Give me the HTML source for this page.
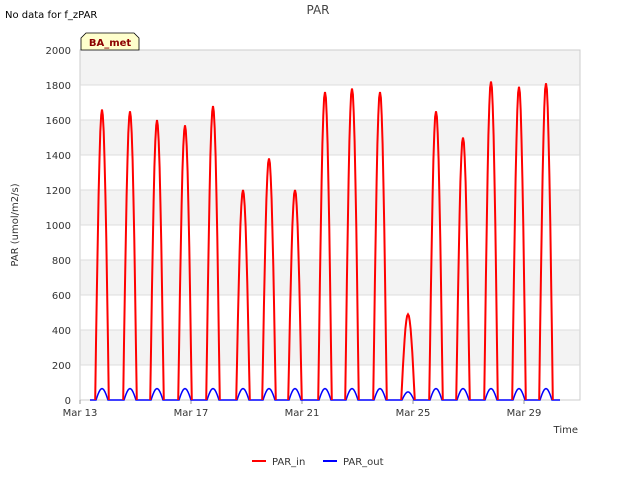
<!DOCTYPE html>
<html><head><meta charset="utf-8"><style>
body{margin:0;background:#fff;}
svg text{font-family:"DejaVu Sans","Liberation Sans",sans-serif;}
</style></head><body>
<svg id="s" width="640" height="480" viewBox="0 0 640 480" xmlns="http://www.w3.org/2000/svg">
<rect width="640" height="480" fill="#fff"/>
<text x="5" y="18" font-size="10" fill="#000">No data for f_zPAR</text>
<text x="318" y="14" font-size="12" fill="#444" text-anchor="middle">PAR</text>
<rect x="80" y="50" width="500" height="350" fill="#fff" stroke="#ccc"/>
<g fill="#f3f3f3">
<rect x="80.5" y="50.5" width="499" height="35"/>
<rect x="80.5" y="120" width="499" height="35"/>
<rect x="80.5" y="190" width="499" height="35"/>
<rect x="80.5" y="260" width="499" height="35"/>
<rect x="80.5" y="330" width="499" height="35"/>
</g>
<g stroke="#ddd" stroke-width="1">
<line x1="80" y1="85" x2="580" y2="85"/><line x1="80" y1="120" x2="580" y2="120"/>
<line x1="80" y1="155" x2="580" y2="155"/><line x1="80" y1="190" x2="580" y2="190"/>
<line x1="80" y1="225" x2="580" y2="225"/><line x1="80" y1="260" x2="580" y2="260"/>
<line x1="80" y1="295" x2="580" y2="295"/><line x1="80" y1="330" x2="580" y2="330"/>
<line x1="80" y1="365" x2="580" y2="365"/>
</g>
<g font-size="10" fill="#333" text-anchor="end">
<text x="71" y="54">2000</text><text x="71" y="89">1800</text><text x="71" y="124">1600</text>
<text x="71" y="159">1400</text><text x="71" y="194">1200</text><text x="71" y="229">1000</text>
<text x="71" y="264">800</text><text x="71" y="299">600</text><text x="71" y="334">400</text>
<text x="71" y="369">200</text><text x="71" y="404">0</text>
</g>
<g font-size="10" fill="#333" text-anchor="middle">
<text x="80" y="416">Mar 13</text><text x="191" y="416">Mar 17</text><text x="302" y="416">Mar 21</text>
<text x="413" y="416">Mar 25</text><text x="524" y="416">Mar 29</text>
</g>
<g stroke="#999"><line x1="80" y1="400" x2="80" y2="404"/><line x1="191" y1="400" x2="191" y2="404"/><line x1="302" y1="400" x2="302" y2="404"/><line x1="413" y1="400" x2="413" y2="404"/><line x1="524" y1="400" x2="524" y2="404"/></g>
<text x="578" y="433" font-size="10" fill="#333" text-anchor="end">Time</text>
<text x="18" y="225" font-size="10" fill="#333" text-anchor="middle" transform="rotate(-90 18 225)">PAR (umol/m2/s)</text>
<g id="d"></g>
<path d="M81,50 L81,38 L86,33 L134,33 L139,38 L139,50 Z" fill="#ffffcc" stroke="#000" stroke-width="0.8"/>
<text x="110" y="46" font-size="10" font-weight="bold" fill="#8b0000" text-anchor="middle">BA_met</text>
<line x1="252" y1="461" x2="266" y2="461" stroke="#f00" stroke-width="2"/>
<text x="272" y="465" font-size="10" fill="#333">PAR_in</text>
<line x1="323" y1="461" x2="337" y2="461" stroke="#00f" stroke-width="2"/>
<text x="343" y="465" font-size="10" fill="#333">PAR_out</text>
</svg>
<script>
var peaks=[[102,1660],[130,1650],[157,1600],[185,1570],[213,1680],[243,1200],[269,1380],[295,1200],[325,1760],[352,1780],[380,1760],[408,490],[436,1650],[463,1500],[491,1820],[519,1790],[546,1810]];
var Y=function(v){return 400-v*0.175;};
var r="",b="M90,400";
peaks.forEach(function(p){
 var c=p[0],h=p[1],pts=[];
 for(var i=-8;i<=8;i++){var t=i/8;var v=h*Math.max(0,Math.cos(t*Math.PI/2));pts.push((c+i*0.85).toFixed(1)+","+Y(v).toFixed(1));}
 r+='<polyline points="'+pts.join(" ")+'" fill="none" stroke="#f00" stroke-width="2"/>';
 b+=" L"+(c-7)+",400";
 for(var i=-6;i<=6;i++){var t=i/6;var v=65*Math.max(0,Math.cos(t*Math.PI/2))*Math.min(1,h/1200+0.3);b+=" L"+(c+i).toFixed(1)+","+Y(v).toFixed(1);}
 b+=" L"+(c+7)+",400";
});
b+=" L560,400";
document.getElementById("d").innerHTML='<path d="'+b+'" fill="none" stroke="#00f" stroke-width="1.5"/>'+r;
</script>
</body></html>
